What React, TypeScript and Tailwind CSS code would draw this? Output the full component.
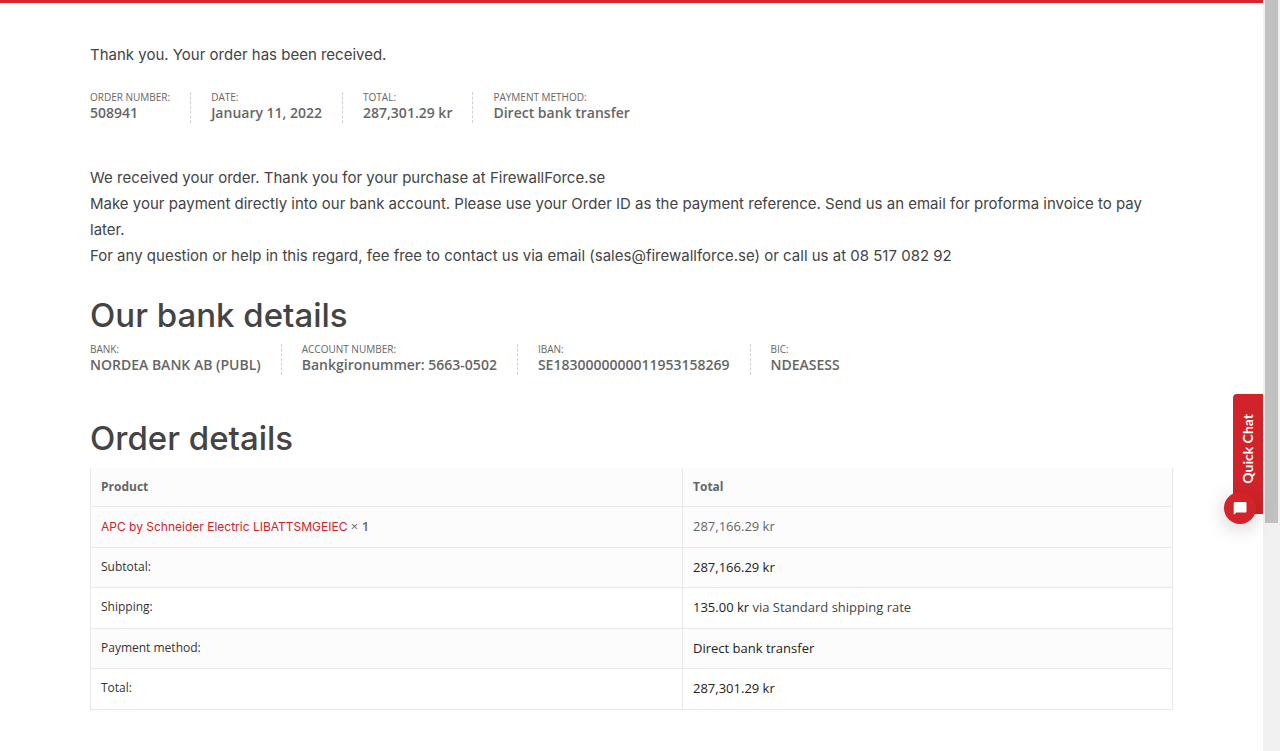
import React from "react";

type Detail = { label: string; value: string };

const orderOverview: Detail[] = [
  { label: "Order number:", value: "508941" },
  { label: "Date:", value: "January 11, 2022" },
  { label: "Total:", value: "287,301.29 kr" },
  { label: "Payment method:", value: "Direct bank transfer" },
];

const bankDetails: Detail[] = [
  { label: "Bank:", value: "NORDEA BANK AB (PUBL)" },
  { label: "Account number:", value: "Bankgironummer: 5663-0502" },
  { label: "IBAN:", value: "SE1830000000011953158269" },
  { label: "BIC:", value: "NDEASESS" },
];

const summary: { label: string; value: string; note?: string }[] = [
  { label: "Subtotal:", value: "287,166.29 kr" },
  { label: "Shipping:", value: "135.00 kr", note: "via Standard shipping rate" },
  { label: "Payment method:", value: "Direct bank transfer" },
  { label: "Total:", value: "287,301.29 kr" },
];

function DetailList({ items }: { items: Detail[] }) {
  return (
    <ul className="flex flex-wrap font-['Open_Sans',sans-serif] text-[#666]">
      {items.map((item) => (
        <li
          key={item.label}
          className="mr-5 border-r border-dashed border-[#d3ced2] pr-5 pb-px last:mr-0 last:border-r-0 last:pr-0"
        >
          <div className="text-[10px] leading-[11px] uppercase">{item.label}</div>
          <strong className="block text-sm leading-[19px] font-semibold">{item.value}</strong>
        </li>
      ))}
    </ul>
  );
}

function Heading({ children }: { children: React.ReactNode }) {
  return (
    <h2 className="font-[Inter,sans-serif] text-[33px] leading-[44px] font-medium text-[#444]">
      {children}
    </h2>
  );
}

function OrderTable() {
  return (
    <table className="mt-2 w-full border-collapse text-left font-['Open_Sans',sans-serif] text-[13px] leading-5 text-[#444]">
      <thead>
        <tr className="h-[38px] bg-[#fcfcfc] text-xs text-[#666]">
          <th className="w-[592px] border border-t-0 border-[#e9e9e9] px-2.5 font-bold">Product</th>
          <th className="border border-t-0 border-[#e9e9e9] px-2.5 font-bold">Total</th>
        </tr>
      </thead>
      <tbody>
        <tr className="h-[41px] bg-[#fcfcfc] text-[#666]">
          <td className="border border-[#e9e9e9] px-2.5 pb-0.5">
            <a href="#product" className="font-[Inter,sans-serif] text-xs text-[#d2232a]">
              APC by Schneider Electric LIBATTSMGEIEC
            </a>{" "}
            × <strong className="font-semibold">1</strong>
          </td>
          <td className="border border-[#e9e9e9] px-2.5 pb-0.5">287,166.29 kr</td>
        </tr>
      </tbody>
      <tfoot>
        {summary.map((row) => (
          <tr key={row.label} className="odd:h-[40px] odd:bg-[#fcfcfc] even:h-[41px]">
            <th className="border border-[#e9e9e9] px-2.5 pb-px text-xs font-medium text-[#333]">
              {row.label}
            </th>
            <td className="border border-[#e9e9e9] px-2.5 pb-px">
              <span className="font-medium text-[#222]">{row.value}</span>
              {row.note ? ` ${row.note}` : null}
            </td>
          </tr>
        ))}
      </tfoot>
    </table>
  );
}

function QuickChat() {
  return (
    <div className="absolute top-[394px] right-[17px]">
      <button
        type="button"
        className="flex h-[120px] w-[30px] items-start justify-center rounded-l bg-[#d2232a] pt-5 text-white"
      >
        <span className="rotate-180 font-[Lato,sans-serif] text-sm leading-5 font-bold [writing-mode:vertical-rl]">
          Quick Chat
        </span>
      </button>
      <button
        type="button"
        aria-label="Open chat"
        className="absolute top-[98px] right-[7px] flex size-8 items-center justify-center rounded-full bg-[#d2232a] shadow-[0_4px_20px_rgba(0,0,0,0.2)]"
      >
        <svg viewBox="0 0 14 13" className="h-[13px] w-[14px]" fill="#fff" aria-hidden="true">
          <path d="M2 0h10.5q1 0 1 1v8.5q0 1-1 1H3.5L.7 12.8V1.2Q.7 0 2 0Z" />
        </svg>
      </button>
    </div>
  );
}

export default function App() {
  return (
    <div className="relative flex min-h-screen bg-white">
      <main className="flex-1 border-t-3 border-[#d9232e] px-[90px] font-[Inter,sans-serif] text-[15px] leading-[26px] text-[#444]">
        <p className="mt-[39px] mb-6">Thank you. Your order has been received.</p>
        <DetailList items={orderOverview} />
        <div className="mt-[42px]">
          <p>We received your order. Thank you for your purchase at FirewallForce.se</p>
          <p>
            Make your payment directly into our bank account. Please use your Order ID as the
            payment reference. Send us an email for proforma invoice to pay later.
          </p>
          <p>
            For any question or help in this regard, fee free to contact us via email
            (sales@firewallforce.se) or call us at 08 517 082 92
          </p>
        </div>
        <section className="mt-6 mb-[41px]">
          <Heading>Our bank details</Heading>
          <div className="mt-[7px]">
            <DetailList items={bankDetails} />
          </div>
        </section>
        <section>
          <Heading>Order details</Heading>
          <OrderTable />
        </section>
      </main>
      <div className="w-[17px] bg-[#f1f1f1] px-0.5" aria-hidden="true">
        <div className="h-[523px] bg-[#c1c1c1]" />
      </div>
      <QuickChat />
    </div>
  );
}
